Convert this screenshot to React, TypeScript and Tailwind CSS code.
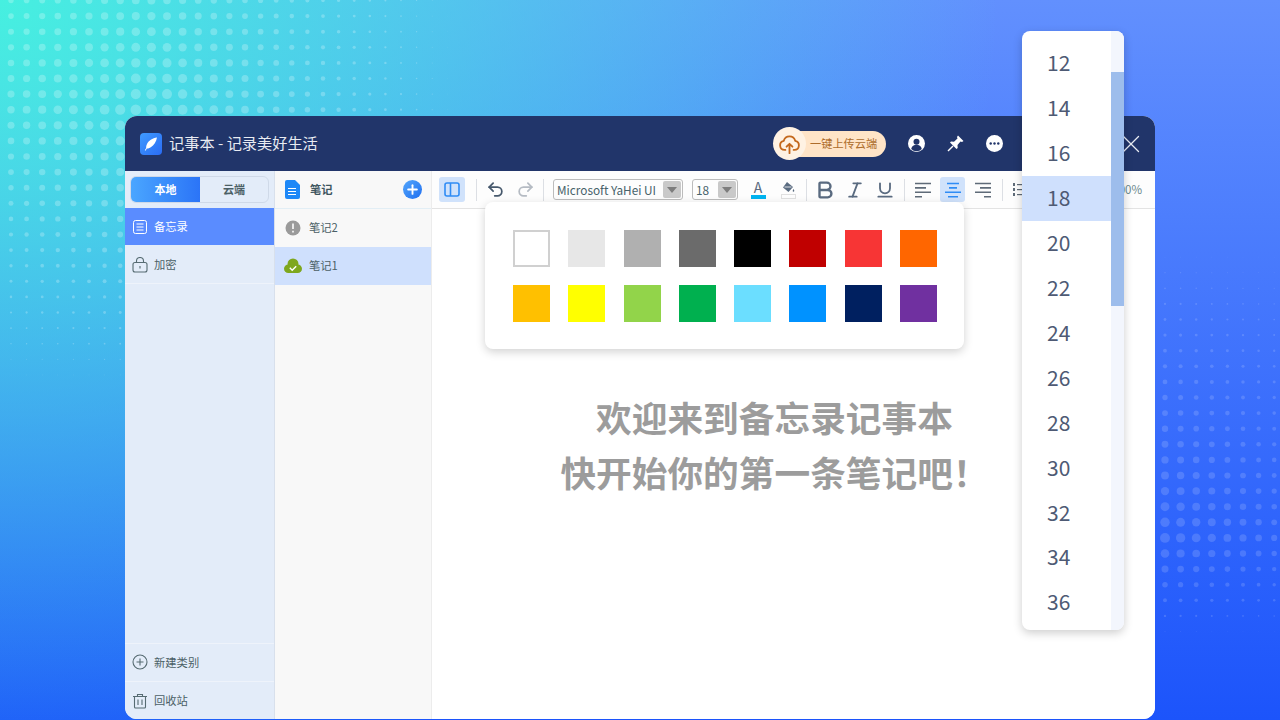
import React from "react";
import { Undo2, Redo2, Bold, Italic, Underline, X, Plus } from "lucide-react";

const dots: { x: number; y: number; r: number; o: number }[] = [];
for (let i = 0; i < 31; i++) {
  for (let j = 0; j < 26; j++) {
    const x = 11 + i * 15.6;
    const y = j * 15.6 + 0.5;
    const fy = y < 110 ? 0.72 + (0.28 * y) / 110 : Math.max(0, 1 - (y - 110) / 285);
    const fx = x < 150 ? 0.65 + (0.35 * x) / 150 : Math.max(0, 1 - (x - 150) / 314);
    const r = 5.5 * fy * fx;
    if (r > 0.2) dots.push({ x, y, r, o: 0.24 });
  }
}
for (let i = 0; i < 8; i++) {
  for (let j = 0; j < 28; j++) {
    const x = 1165 + i * 15.6;
    const y = 241.5 + j * 15.6;
    const fy = y < 540 ? Math.max(0, (y - 235) / 305) : Math.max(0, 1 - (y - 540) / 100);
    const fx = 1 - (0.38 * i) / 7;
    const r = 5 * fy * fx;
    if (r > 0.2) dots.push({ x, y, r, o: 0.15 });
  }
}

const fontCls = "font-['Noto_Sans_CJK_SC','Noto_Sans',sans-serif]";

const swatches = [
  "#ffffff", "#e7e7e7", "#b0b0b0", "#6b6b6b", "#000000", "#c00000", "#f73535", "#ff6600",
  "#ffc000", "#ffff00", "#92d44a", "#00b04f", "#6bdeff", "#0092ff", "#002060", "#7030a0",
];
const sizes = [12, 14, 16, 18, 20, 22, 24, 26, 28, 30, 32, 34, 36];

function Sep() {
  return <div className="w-px h-[22px] bg-[#dcdfe4]" />;
}

function AlignIcon({ kind, color }: { kind: "l" | "c" | "r"; color: string }) {
  const rows =
    kind === "l"
      ? [[1, 17], [1, 12], [1, 17], [1, 8]]
      : kind === "c"
      ? [[3, 15], [5, 13], [1, 17], [4, 14]]
      : [[1, 17], [6, 17], [1, 17], [10, 17]];
  return (
    <svg width="18" height="18" viewBox="0 0 18 18" fill="none" stroke={color} strokeWidth="1.6">
      {rows.map((r, i) => (
        <line key={i} x1={r[0]} x2={r[1]} y1={2.5 + i * 4.4} y2={2.5 + i * 4.4} />
      ))}
    </svg>
  );
}

function Arrow() {
  return (
    <div className="w-[18px] h-[17px] bg-[#c9c9c9] rounded-[2px] flex items-center justify-center">
      <div className="w-0 h-0 border-x-[5px] border-x-transparent border-t-[6px] border-t-[#7d7d7d]" />
    </div>
  );
}

export default function App() {
  return (
    <div
      className={`relative w-full h-[720px] overflow-hidden pt-[116px] pl-[125px] ${fontCls} bg-[radial-gradient(ellipse_1000px_800px_at_0_0,#46f0e0_0%,rgba(70,240,224,0)_100%),linear-gradient(180deg,#6290fe_0%,#1c54fb_100%)]`}
    >
      <svg className="absolute inset-0" width="1280" height="720" fill="#ffffff">
        {dots.map((d, i) => (
          <circle key={i} cx={d.x} cy={d.y} r={d.r} opacity={d.o} />
        ))}
      </svg>

      {/* window */}
      <div className="relative w-[1030px] h-[603px] rounded-[12px] overflow-hidden flex flex-col bg-white">
        {/* title bar */}
        <div className="h-[55px] bg-[#21356a] flex items-center shrink-0">
          <div className="ml-[15px] w-[22px] h-[22px] rounded-[4px] bg-[linear-gradient(135deg,#3f9bff,#2a6cf5)] flex items-center justify-center">
            <svg width="16" height="16" viewBox="0 0 16 16">
              <path d="M14 1.5C9.5 2 5.5 4.5 3.8 8.5c-.6 1.5-.7 2.6-.6 3.4L1.8 14.3l.7.4 1.4-2.2c1 .1 2.5-.3 3.9-1.3C11 9.2 13.3 5.6 14 1.5z" fill="#ffffff" />
            </svg>
          </div>
          <div className="ml-[7px] w-[149px] pb-[2px] text-[15.2px] text-[#e8ebf2] whitespace-nowrap">记事本 - 记录美好生活</div>
          <div className="ml-[455px] relative flex items-center h-[34px] w-[113px] shrink-0">
            <div className="absolute left-[10px] right-0 h-[26px] rounded-full bg-[#ffe4c7] flex items-center pl-[27px] text-[11.2px] text-[#ad6c2b] whitespace-nowrap">
              一键上传云端
            </div>
            <div className="absolute left-0 w-[33px] h-[33px] rounded-full bg-[#fff2e3] flex items-center justify-center">
              <svg width="23" height="23" viewBox="0 0 25 25" fill="none" stroke="#c4691d" strokeWidth="2" strokeLinecap="round" strokeLinejoin="round">
                <path d="M8 19.5H7.200a5 5 0 0 1-.9-9.900 6.400 6.400 0 0 1 12.400 0 5 5 0 0 1-.9 9.900H17" />
                <path d="M12.500 23v-10M9.300 16l3.200-3.200 3.200 3.200" />
              </svg>
            </div>
          </div>
          <div className="ml-[22px] w-[17px] h-[17px] shrink-0">
            <svg width="17" height="17" viewBox="0 0 17 17">
              <circle cx="8.5" cy="8.5" r="8.5" fill="#ffffff" />
              <circle cx="8.5" cy="6.8" r="3" fill="#21356a" />
              <path d="M3.2 14c.6-3 2.8-4.2 5.3-4.2s4.700 1.200 5.300 4.200a7.500 7.500 0 0 1-10.600 0z" fill="#21356a" />
            </svg>
          </div>
          <div className="ml-[22px] w-[17px] h-[17px] shrink-0">
            <svg width="17" height="17" viewBox="0 0 17 17">
              <path d="M11 .5L16.500 6 15 7l-1.500-.5-3 3.500.2 3-1.200 1L3 7.500l1-1 3 .3L10.500 3.500 10 2z" fill="#ffffff" />
              <path d="M6 11l-5 5" stroke="#ffffff" strokeWidth="1.400" />
            </svg>
          </div>
          <div className="ml-[22px] w-[17px] h-[17px] shrink-0">
            <svg width="17" height="17" viewBox="0 0 17 17">
              <circle cx="8.5" cy="8.500" r="8.500" fill="#ffffff" />
              <circle cx="4.700" cy="8.500" r="1.200" fill="#21356a" />
              <circle cx="8.500" cy="8.500" r="1.200" fill="#21356a" />
              <circle cx="12.300" cy="8.500" r="1.200" fill="#21356a" />
            </svg>
          </div>
          <div className="ml-[113px] shrink-0">
            <X size={30} color="#e8ebf2" strokeWidth={1} />
          </div>
        </div>

        <div className="flex-1 flex min-h-0">
          {/* sidebar */}
          <div className="w-[150px] shrink-0 bg-[#e3ecf9] border-r border-[#d8e0ec] flex flex-col">
            <div className="h-[37px] pt-[5px] pl-[5px]">
              <div className="w-[139px] h-[27px] rounded-[6px] border border-[#cfd9e8] flex overflow-hidden text-[11px] font-bold">
                <div className="w-[69px] bg-[linear-gradient(90deg,#4aa6ff,#2b74f7)] text-white flex items-center justify-center">本地</div>
                <div className="flex-1 text-[#4b5f66] flex items-center justify-center">云端</div>
              </div>
            </div>
            <div className="h-[37px] bg-[#5a8cff] flex items-center pl-[7px] gap-[6px] text-[11.300px] text-white">
              <svg width="16" height="16" viewBox="0 0 16 16" fill="none" stroke="#ffffff" strokeWidth="1">
                <rect x="1.500" y="1.500" width="13" height="13" rx="2" />
                <path d="M4.500 5h7M4.500 8h7M4.500 11h7" />
              </svg>
              备忘录
            </div>
            <div className="mt-[1px] h-[38px] border-b border-[#eef3fb] flex items-center pl-[7px] gap-[6px] text-[11.300px] text-[#4b5f66]">
              <svg width="16" height="16" viewBox="0 0 16 16" fill="none" stroke="#566b72" strokeWidth="1.100">
                <rect x="1" y="5.500" width="14" height="9.500" rx="2" />
                <path d="M4.500 5.500V4a3.500 3.500 0 0 1 7 0v1.500M8 9v2.500" />
              </svg>
              加密
            </div>
            <div className="flex-1" />
            <div className="h-[38px] border-t border-[#eef3fb] flex items-center pl-[7px] pb-[1px] gap-[6px] text-[11.300px] text-[#4b5f66]">
              <svg width="16" height="16" viewBox="0 0 16 16" fill="none" stroke="#566b72" strokeWidth="1.100">
                <circle cx="8" cy="8" r="7" />
                <path d="M8 4.500v7M4.500 8h7" />
              </svg>
              新建类别
            </div>
            <div className="h-[38px] border-t border-[#eef3fb] flex items-center pl-[7px] gap-[6px] text-[11.300px] text-[#4b5f66]">
              <svg width="16" height="16" viewBox="0 0 16 16" fill="none" stroke="#566b72" strokeWidth="1.100">
                <path d="M1 3.500h14M5.500 3.500V1.500h5v2M2.500 3.500V14a1 1 0 0 0 1 1h9a1 1 0 0 0 1-1V3.500M6 6.500v5.500M10 6.500v5.500" />
              </svg>
              回收站
            </div>
          </div>

          {/* note list */}
          <div className="w-[157px] shrink-0 bg-[#f8f8f8] border-r border-[#ececec] flex flex-col">
            <div className="h-[38px] border-b border-[#e2eef5] flex items-center pl-[10px] relative">
              <svg width="15" height="19" viewBox="0 0 15 19">
                <path d="M2 0h8l5 5v12a2 2 0 0 1-2 2H2a2 2 0 0 1-2-2V2a2 2 0 0 1 2-2z" fill="#1e88f7" />
                <path d="M3 8.500h8M3 11.500h8M3 14.500h8" stroke="#ffffff" strokeWidth="1" />
              </svg>
              <span className="ml-[10px] text-[11.300px] font-bold text-[#3f5660]">笔记</span>
              <div className="ml-auto mr-[9px] w-[19px] h-[19px] rounded-full bg-[linear-gradient(135deg,#54a6fb,#1f6ff0)] flex items-center justify-center">
                <Plus size={15} color="#ffffff" strokeWidth={3} />
              </div>
            </div>
            <div className="h-[38px] pb-[1px] flex items-center pl-[10px] gap-[8px] text-[11.300px] text-[#4b5f66]">
              <svg width="16" height="16" viewBox="0 0 16 16">
                <circle cx="8" cy="8" r="7.500" fill="#9a9a9a" />
                <path d="M8 3.500v5.500M8 10.800v1.600" stroke="#f2f2f2" strokeWidth="1.800" />
              </svg>
              笔记2
            </div>
            <div className="h-[38px] pb-[1px] bg-[#cfe0fd] flex items-center pl-[9px] gap-[7px] text-[11.300px] text-[#4b5f66]">
              <svg width="18" height="16" viewBox="0 0 18 16" fill="#7ea71e">
                <circle cx="9" cy="6" r="5.500" />
                <circle cx="4.300" cy="10.700" r="4.300" />
                <circle cx="13.700" cy="10.700" r="4.300" />
                <rect x="4" y="7" width="10" height="8" />
                <path d="M5.800 9.800l2.400 2.400 4-4" stroke="#ffffff" strokeWidth="1.400" fill="none" />
              </svg>
              笔记1
            </div>
          </div>

          {/* editor */}
          <div className="flex-1 flex flex-col min-w-0 bg-white">
            <div className="h-[38px] border-b border-[#e3e3e3] bg-[#fdfdfd] flex items-center pl-[7px] whitespace-nowrap text-[#5a6b80] relative">
              <div className="w-[26px] h-[25px] rounded-[3px] bg-[#d0e2fb] flex items-center justify-center">
                <svg width="16" height="15" viewBox="0 0 16 15" fill="none" stroke="#2f8cf5" strokeWidth="1.600">
                  <rect x="1" y="1" width="14" height="13" rx="2" />
                  <path d="M6.500 1v13" />
                </svg>
              </div>
              <div className="ml-[11px]"><Sep /></div>
              <div className="ml-[9px]"><Undo2 size={19} color="#46586c" strokeWidth={2.200} /></div>
              <div className="ml-[11px]"><Redo2 size={19} color="#b5bbc3" strokeWidth={2.200} /></div>
              <div className="ml-[8px]"><Sep /></div>
              <div className="ml-[9px] w-[130px] h-[21px] rounded-[3px] border border-[#bcbcbc] flex items-center justify-between pl-[3px] pr-px text-[11.800px] text-[#47626a]">
                Microsoft YaHei UI
                <Arrow />
              </div>
              <div className="ml-[9px] w-[46px] h-[21px] rounded-[3px] border border-[#bcbcbc] flex items-center justify-between pl-[3px] pr-px text-[11.800px] text-[#47626a]">
                18
                <Arrow />
              </div>
              <div className="ml-[12px] w-[16px] flex flex-col items-center">
                <span className="text-[14px] leading-[15px] text-[#5a6b80]">A</span>
                <div className="w-[15px] h-[4px] bg-[#00b4f0]" />
              </div>
              <div className="ml-[14px] w-[16px] flex flex-col items-center">
                <svg width="14" height="12" viewBox="0 0 14 12">
                  <path d="M6 1l6 5-4.500 5L2 6.500z" fill="#5a6b80" />
                  <path d="M3.500 6h7" stroke="#ffffff" strokeWidth="0.800" />
                  <path d="M12.500 8c.8 1.200 1 2 .5 2.600-.5.500-1.300.200-1.300-.600 0-.500.300-1.200.800-2z" fill="#5a6b80" />
                </svg>
                <div className="w-[15px] h-[5px] border border-[#e0e0e0] mt-px" />
              </div>
              <div className="ml-[10px]"><Sep /></div>
              <div className="ml-[7px]"><Bold size={22} color="#5a6b80" strokeWidth={2.600} /></div>
              <div className="ml-[9px]"><Italic size={20} color="#5a6b80" strokeWidth={2.200} /></div>
              <div className="ml-[10px]"><Underline size={20} color="#5a6b80" strokeWidth={2.200} /></div>
              <div className="ml-[9px]"><Sep /></div>
              <div className="ml-[9px]"><AlignIcon kind="l" color="#5f6b78" /></div>
              <div className="ml-[8px] w-[25px] h-[25px] rounded-[3px] bg-[#d0e2fb] flex items-center justify-center">
                <AlignIcon kind="c" color="#2f8cf5" />
              </div>
              <div className="ml-[9px]"><AlignIcon kind="r" color="#5f6b78" /></div>
              <div className="ml-[10px]"><Sep /></div>
              <div className="ml-[10px]">
                <svg width="12" height="15" viewBox="0 0 12 15" fill="#5f6b78">
                  <rect x="0" y="1" width="2" height="3" />
                  <rect x="4" y="2" width="7" height="1.200" />
                  <rect x="0" y="6" width="2" height="3" />
                  <rect x="4" y="7" width="7" height="1.200" />
                  <rect x="0" y="11" width="2" height="3" />
                  <rect x="4" y="12" width="7" height="1.200" />
                </svg>
              </div>
              <div className="absolute right-[13px] top-[10px] text-[11.500px] leading-[17px] text-[#6c8a8e]">100%</div>
            </div>
            <div className="flex-1 pt-[180px] pr-[38px] text-center text-[35.700px] leading-[55px] font-bold text-[#9c9c9c]">
              <div>欢迎来到备忘录记事本</div>
              <div>快开始你的第一条笔记吧！</div>
            </div>
          </div>
        </div>
      </div>

      {/* colour popover */}
      <div className="absolute left-[485px] top-[202px] w-[479px] h-[147px] bg-white rounded-[8px] shadow-[0_3px_10px_rgba(0,0,0,0.18)] pt-[28px] pl-[28px]">
        <div className="grid grid-cols-[repeat(8,37px)] gap-x-[18.300px] gap-y-[18px]">
          {swatches.map((c, i) => (
            <div
              key={i}
              style={{ background: c }}
              className={`h-[37px] ${i === 0 ? "border-2 border-[#d0d0d0]" : ""}`}
            />
          ))}
        </div>
      </div>

      {/* size menu */}
      <div className="absolute left-[1022px] top-[31px] w-[102px] h-[599px] bg-white rounded-[8px] overflow-hidden shadow-[0_3px_10px_rgba(0,0,0,0.2)] flex">
        <div className="w-[89px] pt-[10px] text-[21px] text-[#4e5a74]">
          {sizes.map((s, i) => (
            <div key={s} className={`h-[44.900px] pl-[25px] flex items-center ${i < 2 ? "pb-[2px]" : ""} ${s === 18 ? "bg-[#cfe0fd]" : ""}`}>
              {s}
            </div>
          ))}
        </div>
        <div className="flex-1 bg-[#f3f6fd] pt-[41px]">
          <div className="h-[234px] bg-[#9dbdec]" />
        </div>
      </div>
    </div>
  );
}
